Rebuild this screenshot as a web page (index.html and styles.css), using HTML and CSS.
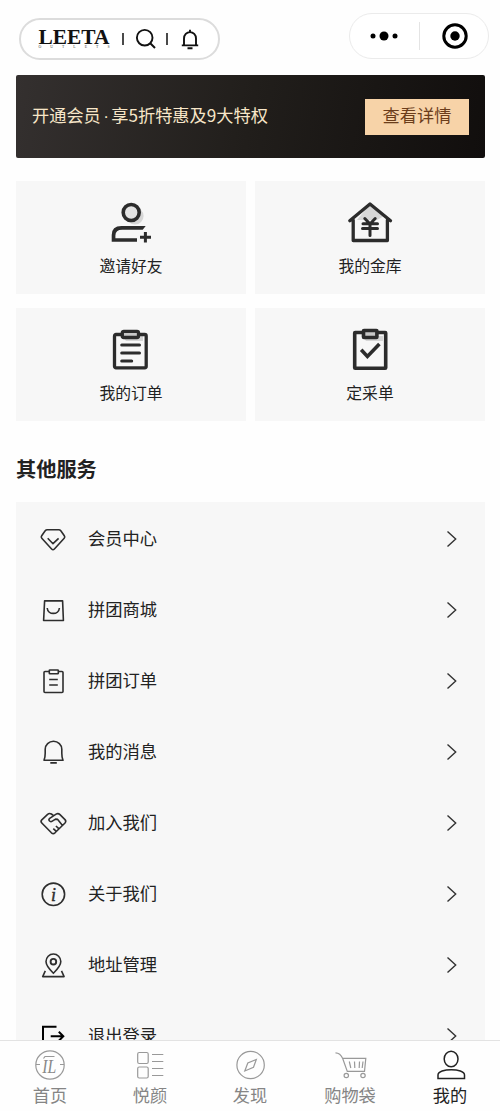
FILE: index.html
```html
<!DOCTYPE html>
<html lang="zh-CN">
<head>
<meta charset="utf-8">
<title>我的</title>
<link rel="stylesheet" href="styles.css">
</head>
<body>
<div class="app">
  <header class="topbar">
    <div class="brand-pill">
      <svg class="brand" width="76" height="24" viewBox="0 0 76 24">
        <text class="brand-name" x="0.5" y="16.700" textLength="71" lengthAdjust="spacingAndGlyphs">LEETA</text>
        <text class="brand-sub" x="0.5" y="21.200" textLength="71">OUTLETS</text>
      </svg>
      <i class="sep"></i>
      <svg class="search" width="20" height="20" viewBox="0 0 20 20"><circle cx="8.700" cy="8.700" r="7.800"/><path d="M14 14l5 5"/></svg>
      <i class="sep"></i>
      <svg class="bell" width="18" height="20" viewBox="0 0 18 20"><path d="M3 16.200V9.500a6 6.400 0 0 1 12 0v6.700M.8 16.400h16.400M6.500 19.200h5M9 .8v2.400"/></svg>
    </div>
    <div class="capsule">
      <svg width="28" height="14" viewBox="0 0 28 14"><circle cx="3" cy="7" r="2.500"/><circle cx="14" cy="7" r="4.500"/><circle cx="25" cy="7" r="2.500"/></svg>
      <i class="capsule-line"></i>
      <svg width="26" height="26" viewBox="0 0 26 26"><circle class="ring" cx="13" cy="13" r="11.200"/><circle cx="13" cy="13" r="4.700"/></svg>
    </div>
  </header>

  <section class="banner">
    <p>开通会员<span class="dot">·</span>享5折特惠及9大特权</p>
    <a class="detail">查看详情</a>
  </section>

  <section class="cards">
    <a class="card">
      <svg class="card-icon" width="48" height="48" viewBox="0 0 48 48"><circle class="shade" cx="28" cy="17" r="8.600"/><circle class="pale" cx="24.200" cy="13.500" r="8"/><path class="solid" d="M38.700 27l-3 3.700H15.200Q8.400 30.700 8.400 36.500V39.200H30V42.800H4.700V36Q4.700 27 14.500 27z"/><path class="thin" d="M33 38.300h11M38.400 33v10.500"/></svg>
      <span>邀请好友</span>
    </a>
    <a class="card">
      <svg class="card-icon round" width="48" height="48" viewBox="0 0 48 48"><path class="shade" d="M24 5l14 12-7 4H11z"/><path d="M3.800 21.800L24 5l20.500 16.800M7.200 21v20.500h34.200V21"/><path class="thin" d="M18.800 19.500l5.200 5.500 5.200-5.500M17 24.700h14.500M16.500 29.500h15M24 25v11.500"/></svg>
      <span>我的金库</span>
    </a>
    <a class="card">
      <svg class="card-icon round" width="48" height="48" viewBox="0 0 48 48"><path class="shade" d="M16 10h20v5H19z"/><rect x="7.500" y="8.500" width="31.700" height="33.300" rx="1.500"/><rect class="clip" x="15.300" y="5.300" width="16.200" height="6.200" rx="1.500"/><path class="thin" d="M14.700 19h17.800M14.700 27h17.800M14.700 35h10"/></svg>
      <span>我的订单</span>
    </a>
    <a class="card">
      <svg class="card-icon" width="48" height="48" viewBox="0 0 48 48"><path class="shade" d="M17 10h20v5H20z"/><rect x="8.700" y="6.500" width="31" height="35.800" rx=".5"/><rect class="clip" x="17.500" y="4.500" width="13.400" height="7" rx=".5"/><path d="M15.200 23.800l6.200 6.600 12-12.400"/></svg>
      <span>定采单</span>
    </a>
  </section>

  <h2 class="heading">其他服务</h2>

  <nav class="list">
    <a class="row">
      <svg class="row-icon" width="28" height="28" viewBox="0 0 28 28"><path d="M8.200 4.700h11.600q1.200 0 2 1l3.500 5q1 1.400-.1 2.600L15.400 24q-1.400 1.400-2.800 0L2.800 13.300q-1.100-1.200-.1-2.600l3.500-5q.8-1 2-1zM8.700 13.300L14 18.700l5.600-5.400"/></svg>
      <span>会员中心</span>
      <svg class="arrow" width="11" height="18" viewBox="0 0 11 18"><path d="M1.500 1.500L9.700 9l-8.200 7.500"/></svg>
    </a>
    <a class="row">
      <svg class="row-icon" width="28" height="28" viewBox="0 0 28 28"><path d="M5.600 4.900h18l.8 19.600H4.600zM8.200 12c.6 7.200 11.600 7.200 12.200 0"/></svg>
      <span>拼团商城</span>
      <svg class="arrow" width="11" height="18" viewBox="0 0 11 18"><path d="M1.500 1.500L9.700 9l-8.200 7.500"/></svg>
    </a>
    <a class="row">
      <svg class="row-icon" width="28" height="28" viewBox="0 0 28 28"><rect x="5" y="4.500" width="19" height="21" rx="1"/><rect class="clip" x="10.300" y="3" width="9" height="3.800" rx=".6"/><path d="M10.200 12.500h8.600M10.200 18h8.600"/></svg>
      <span>拼团订单</span>
      <svg class="arrow" width="11" height="18" viewBox="0 0 11 18"><path d="M1.500 1.500L9.700 9l-8.200 7.500"/></svg>
    </a>
    <a class="row">
      <svg class="row-icon" width="28" height="28" viewBox="0 0 28 28"><path d="M5 22.300c.9-2 1.200-4 1.200-7v-4a8.300 8 0 0 1 16.600 0v4c0 3 .3 5 1.200 7zM11.300 24.900h6.500"/></svg>
      <span>我的消息</span>
      <svg class="arrow" width="11" height="18" viewBox="0 0 11 18"><path d="M1.500 1.500L9.700 9l-8.200 7.500"/></svg>
    </a>
    <a class="row">
      <svg class="row-icon" width="28" height="28" viewBox="0 0 28 28"><path d="M14.500 6.600L12.400 5q-2-1.200-3.800.3L2.800 10.800q-1.500 1.600 0 3.200L12.400 23.800q1.900 1.500 3.600 0L26 14q1.500-1.700 0-3.400l-5-5q-1.800-1.700-3.900-.5L10.700 9.300q-1.500 1.400-.2 2.700 1.200 1.100 2.800.1l3.200-2 2.200.3 4.800 6M19.800 19.600L16.900 17M17 22.200l-2.700-2.600"/></svg>
      <span>加入我们</span>
      <svg class="arrow" width="11" height="18" viewBox="0 0 11 18"><path d="M1.500 1.500L9.700 9l-8.200 7.500"/></svg>
    </a>
    <a class="row">
      <svg class="row-icon" width="28" height="28" viewBox="0 0 28 28"><circle cx="14.400" cy="14.300" r="11.200"/><text class="info" x="14.400" y="20.600">i</text></svg>
      <span>关于我们</span>
      <svg class="arrow" width="11" height="18" viewBox="0 0 11 18"><path d="M1.500 1.500L9.700 9l-8.200 7.500"/></svg>
    </a>
    <a class="row">
      <svg class="row-icon" width="28" height="28" viewBox="0 0 28 28"><path d="M14.400 22.300c-3.300-3.200-7.400-7.200-7.400-11.700a7.400 7.600 0 0 1 14.800 0c0 4.500-4.100 8.500-7.400 11.700zM6.300 19.800l-2.600 5.800h21.400l-2.600-5.800"/><circle class="heavy" cx="14.400" cy="10.700" r="2.800"/></svg>
      <span>地址管理</span>
      <svg class="arrow" width="11" height="18" viewBox="0 0 11 18"><path d="M1.500 1.500L9.700 9l-8.200 7.500"/></svg>
    </a>
    <a class="row">
      <svg class="row-icon exit" width="28" height="28" viewBox="0 0 28 28"><path d="M17.500 4.700H4V24h13.500M11.700 14.300h12M19.800 9.800l4.500 4.500-4.500 4.500"/></svg>
      <span>退出登录</span>
      <svg class="arrow" width="11" height="18" viewBox="0 0 11 18"><path d="M1.500 1.500L9.700 9l-8.200 7.500"/></svg>
    </a>
  </nav>

  <footer class="tabs">
    <a class="tab">
      <svg width="32" height="32" viewBox="0 0 32 32"><circle cx="16" cy="16" r="14.200"/><path d="M2 15.500h4M26 15.500h4M9.500 9.500l1.500-2h9.500"/><text class="mono" x="15.300" y="23.500" textLength="14" lengthAdjust="spacingAndGlyphs">IL</text></svg>
      <span>首页</span>
    </a>
    <a class="tab">
      <svg width="32" height="32" viewBox="0 0 32 32"><rect x="3.700" y="3.500" width="10.500" height="11" rx="1.500"/><rect x="3.700" y="18" width="10.500" height="11" rx="1.500"/><path d="M18 5.500h11.300M18 12.500h11.300M18 19.500h11.300M18 26.500h11.300"/></svg>
      <span>悦颜</span>
    </a>
    <a class="tab">
      <svg width="32" height="32" viewBox="0 0 32 32"><circle cx="16.600" cy="16" r="13.700"/><path d="M22.300 10.500l-2.800 7.800-8.700 3.700 3-8z"/></svg>
      <span>发现</span>
    </a>
    <a class="tab">
      <svg width="32" height="32" viewBox="0 0 32 32"><path d="M1.500 3.800c4 0 5.600 2 7.200 5.700l4.600 12.900h17.200l1.300-13.100H8.700M15.300 12.500l1.500 6.500M20.500 12.500l.3 6.500M25.500 12.500l-.3 6.500M29 12.500l-.8 6.500"/><circle cx="12.300" cy="26.500" r="2.200"/><circle cx="29" cy="26.500" r="2.200"/></svg>
      <span>购物袋</span>
    </a>
    <a class="tab active">
      <svg width="32" height="32" viewBox="0 0 32 32"><ellipse cx="17.100" cy="10" rx="6.900" ry="7.700"/><path d="M4 29.500v-3.500c0-7 26.500-7 26.500 0v3.500z"/></svg>
      <span>我的</span>
    </a>
  </footer>
</div>
</body>
</html>
```
FILE: styles.css
```css
* { box-sizing: border-box; }

body {
  margin: 0;
  background: #fefefe;
  color: #222;
  font-family: "Noto Sans CJK SC", sans-serif;
}

p, h2 { margin: 0; }

svg {
  display: block;
  flex: none;
  overflow: visible;
}

.app {
  display: flex;
  flex-direction: column;
  width: 500px;
  height: 1111px;
  overflow: hidden;
}

.topbar {
  display: flex;
  justify-content: space-between;
  flex: none;
  height: 75px;
  padding: 13px 11px 0 19px;
}

.brand-pill {
  display: flex;
  align-items: center;
  width: 201px;
  height: 42px;
  margin-top: 5px;
  padding-left: 17px;
  border: 2px solid #dcdcdc;
  border-radius: 21px;
  background: #fff;
}

.brand-name {
  font: bold 21px "Liberation Serif", serif;
  fill: #111;
}

.brand-sub {
  font: 3.800px "Liberation Serif", serif;
  fill: #444;
}

.sep {
  flex: none;
  width: 2px;
  height: 12px;
  margin-left: 8px;
  background: #4a4a4a;
}

.sep + svg { margin-left: 12px; }
.search + .sep { margin-left: 10px; }

.search, .bell {
  fill: none;
  stroke: #111;
  stroke-width: 1.900;
}

.bell { position: relative; left: 1px; }

.capsule {
  display: flex;
  align-items: center;
  width: 140px;
  height: 46px;
  padding-left: 20px;
  border: 1px solid #ebebeb;
  border-radius: 23px;
  background: #fff;
}

.capsule-line {
  width: 1px;
  height: 28px;
  margin: 0 22px 0 21px;
  background: #e4e4e4;
}

.ring {
  fill: none;
  stroke: #000;
  stroke-width: 3;
}

.banner {
  display: flex;
  align-items: center;
  justify-content: space-between;
  flex: none;
  height: 83px;
  margin: 0 15px 0 16px;
  padding: 0 16px;
  border-radius: 2px;
  background: linear-gradient(100deg, #34302f, #211e1b 50%, #110e0d);
  color: #f7e6c8;
  font-size: 17.200px;
}

.banner p { padding-bottom: 4px; }

.dot {
  display: inline-block;
  width: 10.500px;
  text-align: center;
  font-family: "Liberation Sans", sans-serif;
}

.detail {
  width: 104px;
  height: 36px;
  background: #f7d3a8;
  color: #6b3d1b;
  line-height: 32px;
  text-align: center;
}

.cards {
  display: grid;
  grid-template-columns: 230px 230px;
  gap: 14px 9px;
  flex: none;
  margin: 23px 15px 0 16px;
}

.card {
  display: flex;
  flex-direction: column;
  align-items: center;
  height: 113px;
  padding-top: 18px;
  background: #f7f7f7;
  font-size: 15.800px;
  line-height: 24px;
}

.card span { margin-top: 7px; }

.card-icon {
  fill: none;
  stroke: #2c2c2c;
  stroke-width: 3.600;
}

.card-icon.round {
  stroke-width: 3.300;
  stroke-linecap: round;
  stroke-linejoin: round;
}

.card-icon .thin { stroke-width: 3; }

.card-icon .shade {
  fill: #d6d6d6;
  stroke: none;
}

.card-icon .solid {
  fill: #2c2c2c;
  stroke: none;
}

.card-icon .pale { fill: #e4e4e4; }
.card-icon .clip { fill: #c8c8c8; }

.heading {
  flex: none;
  height: 81px;
  padding: 33px 0 0 16px;
  font-size: 20.200px;
  font-weight: 700;
  line-height: 30px;
}

.list {
  flex: 1;
  min-height: 0;
  margin: 0 15px 0 16px;
  padding-top: 1px;
  overflow: hidden;
  background: #f7f7f7;
}

.row {
  display: flex;
  align-items: center;
  height: 71px;
  padding: 0 28px 0 23px;
  font-size: 17.300px;
}

.row span {
  flex: 1;
  margin-left: 21px;
  padding-bottom: 2px;
}

.row-icon {
  fill: none;
  stroke: #2e2e2e;
  stroke-width: 1.600;
  stroke-linejoin: round;
}

.row-icon .clip { fill: #f7f7f7; }
.row-icon .heavy { stroke-width: 1.900; }

.row-icon.exit {
  stroke: #000;
  stroke-width: 2;
  stroke-linejoin: miter;
}

.info {
  font: italic 18px "Liberation Serif", serif;
  fill: #2e2e2e;
  stroke: #2e2e2e;
  stroke-width: .4;
  text-anchor: middle;
}

.arrow {
  fill: none;
  stroke: #333;
  stroke-width: 1.400;
}

.tabs {
  display: grid;
  grid-template-columns: repeat(5, 1fr);
  flex: none;
  height: 71px;
  border-top: 1px solid #e3e3e3;
  background: #fefefe;
}

.tab {
  display: flex;
  flex-direction: column;
  align-items: center;
  padding-top: 8px;
  color: #858585;
  font-size: 17.200px;
  line-height: 26px;
}

.tab svg {
  fill: none;
  stroke: #999;
  stroke-width: 1.200;
}

.tab span { margin-top: 1px; }

.tab .mono {
  font: italic 19px "Liberation Serif", serif;
  fill: #888;
  stroke: none;
  text-anchor: middle;
}

.tab.active { color: #222; }

.tab.active svg {
  stroke: #222;
  stroke-width: 1.500;
}
```
